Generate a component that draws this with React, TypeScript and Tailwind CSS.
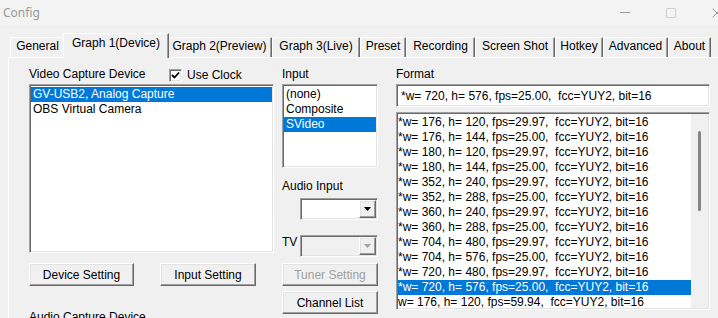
import React from "react";

const sunken =
  "border border-t-[#a0a0a0] border-l-[#a0a0a0] border-r-white border-b-white shadow-[inset_1px_1px_0_#696969,inset_-1px_-1px_0_#e3e3e3]";
const raised =
  "border border-t-white border-l-white border-r-[#696969] border-b-[#696969] shadow-[inset_-1px_-1px_0_#a0a0a0,inset_1px_1px_0_#e3e3e3]";

const tabs = [
  { label: "General", cls: "w-[55px]" },
  { label: "Graph 1(Device)", cls: "w-[106px]", active: true },
  { label: "Graph 2(Preview)", cls: "w-[105px]" },
  { label: "Graph 3(Live)", cls: "w-[88px]" },
  { label: "Preset", cls: "w-[46px]" },
  { label: "Recording", cls: "w-[69px]" },
  { label: "Screen Shot", cls: "w-[80px]" },
  { label: "Hotkey", cls: "w-[48px]" },
  { label: "Advanced", cls: "w-[65px]" },
  { label: "About", cls: "w-[43px]" },
];

const formats = [
  "*w= 176, h= 120, fps=29.97,  fcc=YUY2, bit=16",
  "*w= 176, h= 144, fps=25.00,  fcc=YUY2, bit=16",
  "*w= 180, h= 120, fps=29.97,  fcc=YUY2, bit=16",
  "*w= 180, h= 144, fps=25.00,  fcc=YUY2, bit=16",
  "*w= 352, h= 240, fps=29.97,  fcc=YUY2, bit=16",
  "*w= 352, h= 288, fps=25.00,  fcc=YUY2, bit=16",
  "*w= 360, h= 240, fps=29.97,  fcc=YUY2, bit=16",
  "*w= 360, h= 288, fps=25.00,  fcc=YUY2, bit=16",
  "*w= 704, h= 480, fps=29.97,  fcc=YUY2, bit=16",
  "*w= 704, h= 576, fps=25.00,  fcc=YUY2, bit=16",
  "*w= 720, h= 480, fps=29.97,  fcc=YUY2, bit=16",
  "*w= 720, h= 576, fps=25.00,  fcc=YUY2, bit=16",
  "w= 176, h= 120, fps=59.94,  fcc=YUY2, bit=16",
];

function Row({ text, selected, pad }: { text: string; selected?: boolean; pad?: boolean }) {
  return (
    <div
      className={`h-[15px] leading-[15px] whitespace-pre ${pad ? "pl-[2px]" : ""} ${
        selected ? "bg-[#0078d7] text-white" : "text-black"
      }`}
    >
      {text}
    </div>
  );
}

function Button({ label, disabled, cls }: { label: string; disabled?: boolean; cls: string }) {
  return (
    <div
      className={`${raised} ${cls} h-[23px] flex items-center justify-center bg-[#f0f0f0] ${
        disabled ? "text-[#a0a0a0]" : "text-black"
      }`}
    >
      {label}
    </div>
  );
}

function Combo({ disabled }: { disabled?: boolean }) {
  return (
    <div className={`${sunken} w-[78px] h-[22px] flex p-[1px] ${disabled ? "bg-[#f0f0f0]" : "bg-white"}`}>
      <div className="flex-1" />
      <div className={`${raised} w-[17px] flex items-center justify-center bg-[#f0f0f0]`}>
        <svg width="7" height="4" viewBox="0 0 7 4">
          <path d="M0 0h7L3.5 4z" fill={disabled ? "#a0a0a0" : "#000"} />
        </svg>
      </div>
    </div>
  );
}

export default function App() {
  return (
    <div className="w-[718px] h-[318px] overflow-hidden bg-[#f0f0f0] text-[12px] text-black font-['Liberation_Sans',Arial,sans-serif]">
      {/* Title bar */}
      <div className="h-[25px] bg-[#f3f3f3] flex items-center">
        <span className="pl-[3px] text-[12px] text-[#999999] font-['Noto_Sans',sans-serif]">Config</span>
        <div className="ml-auto -mr-[22px] flex shrink-0">
          <div className="w-[46px] h-[25px] flex items-center justify-center">
            <div className="w-[10px] h-px bg-[#9a9a9a]" />
          </div>
          <div className="w-[46px] h-[25px] flex items-center justify-center">
            <div className="w-[10px] h-[10px] border border-[#cfcfcf] rounded-[1px]" />
          </div>
          <div className="w-[46px] h-[25px] flex items-center justify-center">
            <svg width="10" height="10" viewBox="0 0 10 10">
              <path d="M0.5 0.5l9 9M9.5 0.5l-9 9" stroke="#9a9a9a" strokeWidth="1" />
            </svg>
          </div>
        </div>
      </div>

      {/* Tabs */}
      <div className="pt-[8px] pl-[10px] flex items-end h-[32px]">
        {tabs.map((t) =>
          t.active ? (
            <div
              key={t.label}
              className={`${t.cls} h-[25px] -mb-px -mx-[2px] relative z-10 bg-[#f0f0f0] border-t border-l border-t-white border-l-white border-r border-r-[#696969] shadow-[inset_-1px_0_0_#a0a0a0] pt-[2px] text-center leading-[15px]`}
            >
              {t.label}
            </div>
          ) : (
            <div
              key={t.label}
              className={`${t.cls} h-[20px] bg-[#f0f0f0] border-t border-l border-t-white border-l-white border-r border-r-[#696969] shadow-[inset_-1px_0_0_#a0a0a0] pt-[1px] text-center leading-[15px]`}
            >
              {t.label}
            </div>
          )
        )}
      </div>

      {/* Tab panel */}
      <div className="ml-[8px] w-[720px] h-[300px] border-t border-l border-white">
        <div className="flex pl-[20px] pt-[8px]">
          {/* Video capture device */}
          <div className="w-[245px] flex flex-col">
            <div className="h-[18px] pt-[1px] flex items-start">
              <span className="w-[140px] leading-[15px]">Video Capture Device</span>
              <div className={`${sunken} mt-[2px] w-[13px] h-[13px] bg-white flex items-center justify-center`}>
                <svg width="9" height="9" viewBox="0 0 9 9">
                  <path d="M1 4l2.5 2.5L8 1.5" stroke="#000" strokeWidth="1.8" fill="none" />
                </svg>
              </div>
              <span className="ml-[5px] mt-[1px] leading-[15px]">Use Clock</span>
            </div>
            <div className={`${sunken} h-[169px] bg-white pt-[2px] px-[1px]`}>
              <Row text="GV-USB2, Analog Capture" selected pad />
              <Row text="OBS Virtual Camera" pad />
            </div>
            <div className="mt-[10px] flex">
              <Button label="Device Setting" cls="w-[105px]" />
              <Button label="Input Setting" cls="w-[96px] ml-[26px]" />
            </div>
            <div className="mt-[24px] leading-[15px]">Audio Capture Device</div>
          </div>

          {/* Input */}
          <div className="w-[96px] ml-[8px] flex flex-col">
            <div className="h-[18px] pt-[1px] leading-[15px]">Input</div>
            <div className={`${sunken} h-[84px] bg-white pt-[2px] px-[1px]`}>
              <Row text="(none)" pad />
              <Row text="Composite" pad />
              <Row text="SVideo" selected pad />
            </div>
            <div className="mt-[11px] leading-[15px]">Audio Input</div>
            <div className="mt-[4px] ml-[18px]">
              <Combo />
            </div>
            <div className="mt-[15px] flex">
              <span className="w-[18px] leading-[15px]">TV</span>
              <Combo disabled />
            </div>
            <Button label="Tuner Setting" disabled cls="w-[96px] mt-[6px]" />
            <Button label="Channel List" cls="w-[96px] mt-[5px]" />
          </div>

          {/* Format */}
          <div className="w-[314px] ml-[18px] flex flex-col">
            <div className="h-[18px] pt-[1px] leading-[15px]">Format</div>
            <div className={`${sunken} h-[23px] bg-white flex items-center pl-[4px] whitespace-pre`}>
              *w= 720, h= 576, fps=25.00,  fcc=YUY2, bit=16
            </div>
            <div className={`${sunken} mt-[5px] h-[198px] bg-white flex p-[1px]`}>
              <div className="flex-1 overflow-hidden pt-[1px]">
                {formats.map((f, i) => (
                  <Row key={i} text={f} selected={i === 11} />
                ))}
              </div>
              <div className="w-[17px] bg-[#f0f0f0] pt-[17px] pl-[7px]">
                <div className="w-[3px] h-[80px] rounded-full bg-[#858585]" />
              </div>
            </div>
          </div>
        </div>
      </div>
    </div>
  );
}
